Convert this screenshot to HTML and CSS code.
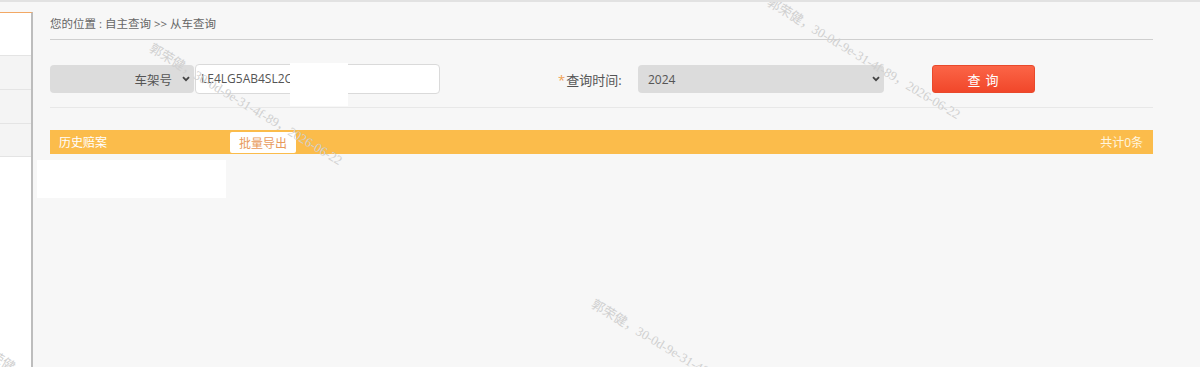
FILE: index.html
```html
<!DOCTYPE html>
<html lang="zh-CN">
<head>
<meta charset="utf-8">
<title>从车查询</title>
<link rel="stylesheet" href="styles.css">
</head>
<body>
<div class="app">
  <aside class="sidebar">
    <div class="side-head"></div>
    <div class="side-row"></div>
    <div class="side-row"></div>
    <div class="side-row"></div>
  </aside>
  <main class="main">
    <div class="breadcrumb">您的位置 : 自主查询 &gt;&gt; 从车查询</div>
    <div class="search-row">
      <div class="field-group">
        <div class="select select-type">
          <span>车架号</span>
          <svg class="chev" width="8" height="6" viewBox="0 0 8 6"><path d="M1 1.2 L4 4.2 L7 1.2" fill="none" stroke="#444" stroke-width="1.8"/></svg>
        </div>
        <div class="input">LE4LG5AB4SL2C</div>
      </div>
      <div class="label"><span class="req">*</span>查询时间:</div>
      <div class="select select-year">
        <span>2024</span>
        <svg class="chev" width="8" height="6" viewBox="0 0 8 6"><path d="M1 1.2 L4 4.2 L7 1.2" fill="none" stroke="#444" stroke-width="1.8"/></svg>
      </div>
      <button class="btn-query">查 询</button>
    </div>
    <div class="result-bar">
      <span class="bar-title">历史赔案</span>
      <button class="btn-export">批量导出</button>
      <span class="bar-count">共计0条</span>
    </div>
  </main>
</div>

<div class="redact redact-a"></div>
<div class="redact redact-b"></div>

<div class="wm wm-1">郭荣健，30-0d-9e-31-4f-89，2026-06-22</div>
<div class="wm wm-2">郭荣健，30-0d-9e-31-4f-89，2026-06-22</div>
<div class="wm wm-3">郭荣健，30-0d-9e-31-4f-89，2026-06-22</div>
<div class="wm wm-4">郭荣健，30-0d-9e-31-4f-89，2026-06-22</div>
</body>
</html>
```

FILE: styles.css
```css
* { box-sizing: border-box; }

html, body {
  margin: 0;
  padding: 0;
  height: 100%;
  overflow: hidden;
}

body {
  background: #f7f7f7;
  border-top: 2px solid #e2e2e2;
  font-family: "Open Sans", "Noto Sans CJK SC", sans-serif;
  font-size: 12px;
  color: #666;
  position: relative;
}

.app {
  display: flex;
  height: 100%;
}

.sidebar {
  width: 33px;
  flex: none;
  margin-top: 10px;
  background: #fff;
  border-top: 1px solid #f2a865;
  border-right: 2px solid #bdbdbd;
}

.side-head {
  height: 42px;
}

.side-row {
  height: 34px;
  background: #f4f4f4;
  border-top: 1px solid #e4e4e4;
}

.side-row:last-child {
  border-bottom: 1px solid #e4e4e4;
}

.main {
  flex: 1;
  padding: 0 47px 0 17px;
}

.breadcrumb {
  padding-top: 7px;
  line-height: 30px;
  height: 38px;
  border-bottom: 1px solid #cfcfcf;
  color: #666;
  font-size: 11.5px;
}

.search-row {
  display: flex;
  align-items: center;
  padding: 24px 0 13px;
  border-bottom: 1px solid #e8e8e8;
}

.field-group {
  display: flex;
  align-items: center;
}

.select {
  height: 28px;
  background: #dcdcdc;
  border-radius: 4px;
  display: flex;
  align-items: center;
  color: #555;
  font-size: 12px;
}

.select-type {
  width: 144px;
  justify-content: flex-end;
  padding-right: 4px;
  gap: 10px;
  font-size: 12.5px;
}

.select-year {
  width: 246px;
  margin-left: 12px;
  justify-content: space-between;
  padding: 0 4px 0 10px;
}

.chev {
  display: block;
}

.input {
  width: 245px;
  height: 30px;
  margin-left: 1px;
  background: #fff;
  border: 1px solid #dadada;
  border-radius: 4px;
  line-height: 28px;
  padding-left: 5px;
  color: #555;
  font-size: 12px;
}

.label {
  margin-left: 118px;
  width: 68px;
  color: #555;
  font-size: 13px;
  white-space: nowrap;
}

.req {
  color: #f0a050;
  margin-right: 1px;
}

.btn-query {
  margin-left: 48px;
  width: 103px;
  height: 28px;
  border: 1px solid #e9492b;
  border-radius: 3px;
  background: linear-gradient(#fb6547, #f1472a);
  color: #fff;
  font-family: "Noto Sans CJK SC", sans-serif;
  font-size: 13px;
  letter-spacing: 1px;
  padding: 0;
}

.result-bar {
  margin-top: 22px;
  height: 24px;
  background: #fbbc4b;
  display: flex;
  align-items: center;
  padding: 0 10px 0 9px;
  color: #fff;
  font-size: 12px;
}

.bar-title {
  width: 171px;
}

.btn-export {
  width: 66px;
  height: 21px;
  background: #fff;
  border: none;
  border-radius: 2px;
  color: #e89a5c;
  font-family: "Noto Sans CJK SC", sans-serif;
  font-size: 12px;
  padding: 0;
}

.bar-count {
  margin-left: auto;
  color: #fff6e0;
}

.redact {
  position: absolute;
  background: #fff;
}

.redact-a {
  left: 290px;
  top: 61px;
  width: 58px;
  height: 43px;
}

.redact-b {
  left: 37px;
  top: 158px;
  width: 189px;
  height: 38px;
}

.wm {
  position: absolute;
  white-space: nowrap;
  transform: rotate(31deg);
  transform-origin: 0 0;
  font-family: "Liberation Serif", "Noto Sans CJK SC", serif;
  font-size: 13px;
  color: #d0d0d0;
  pointer-events: none;
}

.wm-1 { left: 156px; top: 36px; }
.wm-2 { left: 774px; top: -10px; }
.wm-3 { left: 598px; top: 292px; }
.wm-4 { left: -14px; top: 337px; }
```
